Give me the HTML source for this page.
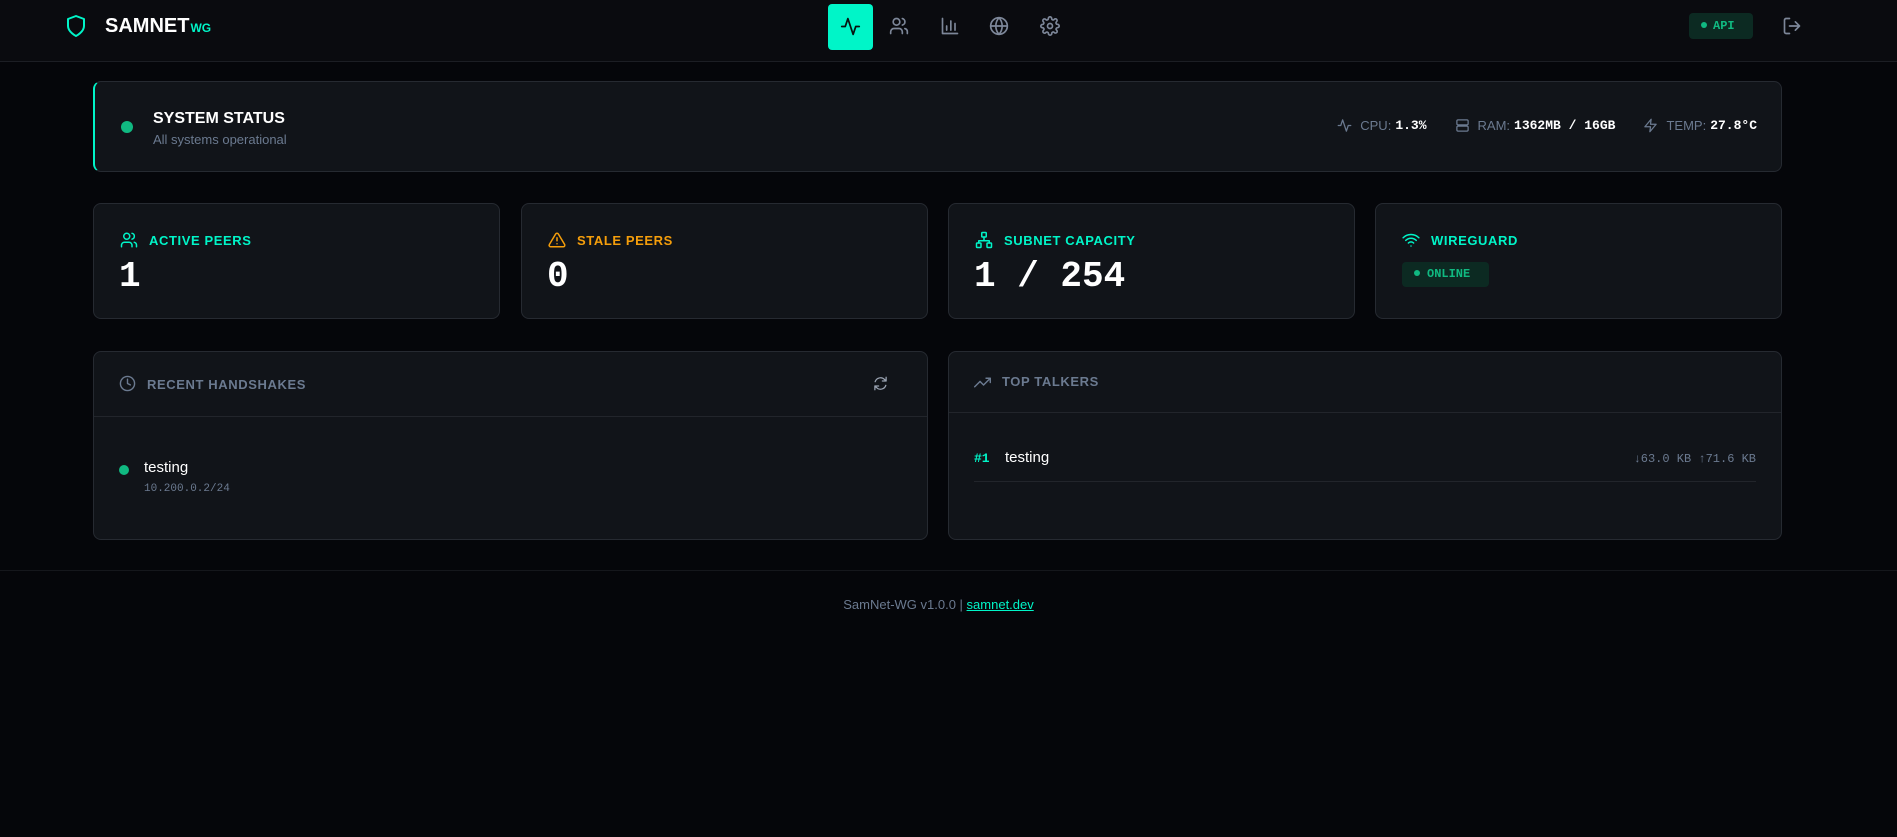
<!DOCTYPE html>
<html><head><meta charset="utf-8"><style>
*{box-sizing:border-box;margin:0;padding:0}
body{width:1897px;height:837px;background:#05060a;font-family:"Liberation Sans",sans-serif;color:#e5e7eb;position:relative;overflow:hidden}
.abs{position:absolute}
.mono{font-family:"Liberation Mono",monospace}
header{position:absolute;left:0;top:0;width:1897px;height:62px;background:#0a0b0f;border-bottom:1px solid #1c1e24}
.card{position:absolute;background:#111419;border:1px solid #262a31;border-radius:8px}
.lbl{font-weight:bold;font-size:13px;letter-spacing:0.6px}
svg{display:block}
.ico{stroke:currentColor;fill:none;stroke-width:2;stroke-linecap:round;stroke-linejoin:round}
.muted{color:#6b7a90}
</style></head><body>
<header>
  <svg class="abs ico" style="left:64px;top:13px;color:#00f5c8" width="24" height="26" viewBox="0 0 24 24"><path d="M12 22s8-4 8-10V5l-8-3-8 3v7c0 6 8 10 8 10z"/></svg>
  <div class="abs" style="left:105px;top:15px;font-size:20px;font-weight:bold;color:#fff">SAMNET<span style="font-size:12px;color:#00f5c8;margin-left:1px">WG</span></div>
  <div class="abs" style="left:828px;top:4px;width:45px;height:46px;background:#00f5c8;border-radius:4px"></div>
  <svg class="abs ico" style="left:840px;top:16px;color:#061410" width="21" height="21" viewBox="0 0 24 24"><path d="M22 12h-4l-3 9L9 3l-3 9H2"/></svg>
  <svg class="abs ico" style="left:889px;top:16px;color:#7d8799" width="20" height="20" viewBox="0 0 24 24"><path d="M16 21v-2a4 4 0 0 0-4-4H6a4 4 0 0 0-4 4v2"/><circle cx="9" cy="7" r="4"/><path d="M22 21v-2a4 4 0 0 0-3-3.9M16 3.1a4 4 0 0 1 0 7.8"/></svg>
  <svg class="abs ico" style="left:940px;top:16px;color:#7d8799" width="20" height="20" viewBox="0 0 24 24"><path d="M3 3v18h18M8 17v-5M13 17V6M18 17v-8"/></svg>
  <svg class="abs ico" style="left:989px;top:16px;color:#7d8799" width="20" height="20" viewBox="0 0 24 24"><circle cx="12" cy="12" r="10"/><path d="M2 12h20M12 2a15 15 0 0 1 0 20M12 2a15 15 0 0 0 0 20"/></svg>
  <svg class="abs ico" style="left:1040px;top:16px;color:#7d8799" width="20" height="20" viewBox="0 0 24 24"><circle cx="12" cy="12" r="3"/><path d="M19.4 15a1.7 1.7 0 0 0 .3 1.8l.1.1a2 2 0 1 1-2.8 2.8l-.1-.1a1.7 1.7 0 0 0-1.8-.3 1.7 1.7 0 0 0-1 1.5V21a2 2 0 1 1-4 0v-.1a1.7 1.7 0 0 0-1.1-1.5 1.7 1.7 0 0 0-1.8.3l-.1.1a2 2 0 1 1-2.8-2.8l.1-.1a1.7 1.7 0 0 0 .3-1.8 1.7 1.7 0 0 0-1.5-1H3a2 2 0 1 1 0-4h.1a1.7 1.7 0 0 0 1.5-1.1 1.7 1.7 0 0 0-.3-1.8l-.1-.1a2 2 0 1 1 2.8-2.8l.1.1a1.7 1.7 0 0 0 1.8.3H9a1.7 1.7 0 0 0 1-1.5V3a2 2 0 1 1 4 0v.1a1.7 1.7 0 0 0 1 1.5 1.7 1.7 0 0 0 1.8-.3l.1-.1a2 2 0 1 1 2.8 2.8l-.1.1a1.7 1.7 0 0 0-.3 1.8V9a1.7 1.7 0 0 0 1.5 1H21a2 2 0 1 1 0 4h-.1a1.7 1.7 0 0 0-1.5 1z"/></svg>
  <div class="abs mono" style="left:1689px;top:13px;width:64px;height:26px;background:#0c2a22;border-radius:4px;color:#10b981;font-size:12px;font-weight:bold;line-height:26px;padding-left:12px"><span style="display:inline-block;width:6px;height:6px;border-radius:3px;background:#10b981;margin-right:6px;vertical-align:1px"></span>API</div>
  <svg class="abs ico" style="left:1782px;top:16px;color:#7d8799" width="20" height="20" viewBox="0 0 24 24"><path d="M9 21H5a2 2 0 0 1-2-2V5a2 2 0 0 1 2-2h4M16 17l5-5-5-5M21 12H9"/></svg>
</header>

<div class="card" style="left:93px;top:81px;width:1689px;height:91px;border-left:2px solid #00f5c8">
  <div class="abs" style="left:26px;top:39px;width:12px;height:12px;border-radius:6px;background:#10b981"></div>
  <div class="abs" style="left:58px;top:28px;font-size:16px;font-weight:bold;color:#fff">SYSTEM STATUS</div>
  <div class="abs muted" style="left:58px;top:50px;font-size:13px">All systems operational</div>
  <div class="abs" style="right:24px;top:36px;font-size:13px;display:flex;align-items:center;white-space:nowrap">
    <svg class="ico muted" width="15" height="15" viewBox="0 0 24 24"><path d="M22 12h-4l-3 9L9 3l-3 9H2"/></svg>
    <span class="muted" style="margin-left:8px">CPU:</span><b class="mono" style="margin-left:4px;color:#fff">1.3%</b>
    <svg class="ico muted" style="margin-left:28px" width="15" height="15" viewBox="0 0 24 24"><rect x="3" y="3" width="18" height="8" rx="2"/><rect x="3" y="13" width="18" height="8" rx="2"/></svg>
    <span class="muted" style="margin-left:8px">RAM:</span><b class="mono" style="margin-left:4px;color:#fff">1362MB / 16GB</b>
    <svg class="ico muted" style="margin-left:28px" width="15" height="15" viewBox="0 0 24 24"><path d="M13 2L3 14h9l-1 8 10-12h-9l1-8z"/></svg>
    <span class="muted" style="margin-left:8px">TEMP:</span><b class="mono" style="margin-left:4px;color:#fff">27.8°C</b>
  </div>
</div>

<div class="card" style="left:93px;top:203px;width:407px;height:116px">
  <svg class="abs ico" style="left:26px;top:27px;color:#00f5c8" width="18" height="18" viewBox="0 0 24 24"><path d="M16 21v-2a4 4 0 0 0-4-4H6a4 4 0 0 0-4 4v2"/><circle cx="9" cy="7" r="4"/><path d="M22 21v-2a4 4 0 0 0-3-3.9M16 3.1a4 4 0 0 1 0 7.8"/></svg>
  <div class="abs lbl" style="left:55px;top:29px;color:#00f5c8">ACTIVE PEERS</div>
  <div class="abs mono" style="left:25px;top:52px;font-size:36px;font-weight:bold;color:#fff">1</div>
</div>
<div class="card" style="left:521px;top:203px;width:407px;height:116px">
  <svg class="abs ico" style="left:26px;top:27px;color:#f59e0b" width="18" height="18" viewBox="0 0 24 24"><path d="M10.3 3.9L1.8 18a2 2 0 0 0 1.7 3h17a2 2 0 0 0 1.7-3L13.7 3.9a2 2 0 0 0-3.4 0zM12 9v4M12 17h.01"/></svg>
  <div class="abs lbl" style="left:55px;top:29px;color:#f59e0b">STALE PEERS</div>
  <div class="abs mono" style="left:25px;top:52px;font-size:36px;font-weight:bold;color:#fff">0</div>
</div>
<div class="card" style="left:948px;top:203px;width:407px;height:116px">
  <svg class="abs ico" style="left:26px;top:27px;color:#00f5c8" width="18" height="18" viewBox="0 0 24 24"><rect x="9" y="2" width="6" height="6" rx="1"/><rect x="2" y="16" width="6" height="6" rx="1"/><rect x="16" y="16" width="6" height="6" rx="1"/><path d="M5 16v-3h14v3M12 8v5"/></svg>
  <div class="abs lbl" style="left:55px;top:29px;color:#00f5c8">SUBNET CAPACITY</div>
  <div class="abs mono" style="left:25px;top:52px;font-size:36px;font-weight:bold;color:#fff">1 / 254</div>
</div>
<div class="card" style="left:1375px;top:203px;width:407px;height:116px">
  <svg class="abs ico" style="left:26px;top:27px;color:#00f5c8" width="18" height="18" viewBox="0 0 24 24"><path d="M5 12.5a10 10 0 0 1 14 0M1.5 9a15 15 0 0 1 21 0M8.5 16a5 5 0 0 1 7 0M12 20h.01"/></svg>
  <div class="abs lbl" style="left:55px;top:29px;color:#00f5c8">WIREGUARD</div>
  <div class="abs mono" style="left:26px;top:58px;width:87px;height:25px;background:#0c2a22;border-radius:4px;color:#10b981;font-size:12px;font-weight:bold;line-height:25px;padding-left:12px"><span style="display:inline-block;width:6px;height:6px;border-radius:3px;background:#10b981;margin-right:7px;vertical-align:1px"></span>ONLINE</div>
</div>

<div class="card" style="left:93px;top:351px;width:835px;height:189px">
  <div class="abs" style="left:0;top:64px;width:100%;height:1px;background:#22252b"></div>
  <svg class="abs ico muted" style="left:25px;top:23px" width="17" height="17" viewBox="0 0 24 24"><circle cx="12" cy="12" r="10"/><path d="M12 6v6l4 2"/></svg>
  <div class="abs lbl muted" style="left:53px;top:25px">RECENT HANDSHAKES</div>
  <svg class="abs ico" style="left:779px;top:24px;color:#9aa3b2" width="15" height="15" viewBox="0 0 24 24"><path d="M21 2v6h-6M3 22v-6h6M3.5 9a9 9 0 0 1 15-3.4L21 8M3 16l2.5 2.4A9 9 0 0 0 20.5 15"/></svg>
  <div class="abs" style="left:25px;top:113px;width:10px;height:10px;border-radius:5px;background:#10b981"></div>
  <div class="abs" style="left:50px;top:107px;font-size:15px;color:#fff">testing</div>
  <div class="abs mono muted" style="left:50px;top:131px;font-size:11px">10.200.0.2/24</div>
</div>
<div class="card" style="left:948px;top:351px;width:834px;height:189px">
  <div class="abs" style="left:0;top:60px;width:100%;height:1px;background:#22252b"></div>
  <svg class="abs ico muted" style="left:25px;top:22px" width="17" height="17" viewBox="0 0 24 24"><path d="M23 6l-9.5 9.5-5-5L1 18M17 6h6v6"/></svg>
  <div class="abs lbl muted" style="left:53px;top:22px">TOP TALKERS</div>
  <div class="abs mono" style="left:25px;top:99px;font-size:13px;font-weight:bold;color:#00f5c8">#1</div>
  <div class="abs" style="left:56px;top:97px;font-size:15px;color:#fff">testing</div>
  <div class="abs mono muted" style="right:25px;top:100px;font-size:12px">↓63.0 KB ↑71.6 KB</div>
  <div class="abs" style="left:25px;top:129px;width:782px;height:1px;background:#22252b"></div>
</div>

<div class="abs" style="left:0;top:570px;width:1897px;height:1px;background:#15171c"></div>
<div class="abs muted" style="left:0;top:597px;width:1877px;text-align:center;font-size:13px">SamNet-WG v1.0.0 | <span style="color:#00f5c8;text-decoration:underline">samnet.dev</span></div>
</body></html>
